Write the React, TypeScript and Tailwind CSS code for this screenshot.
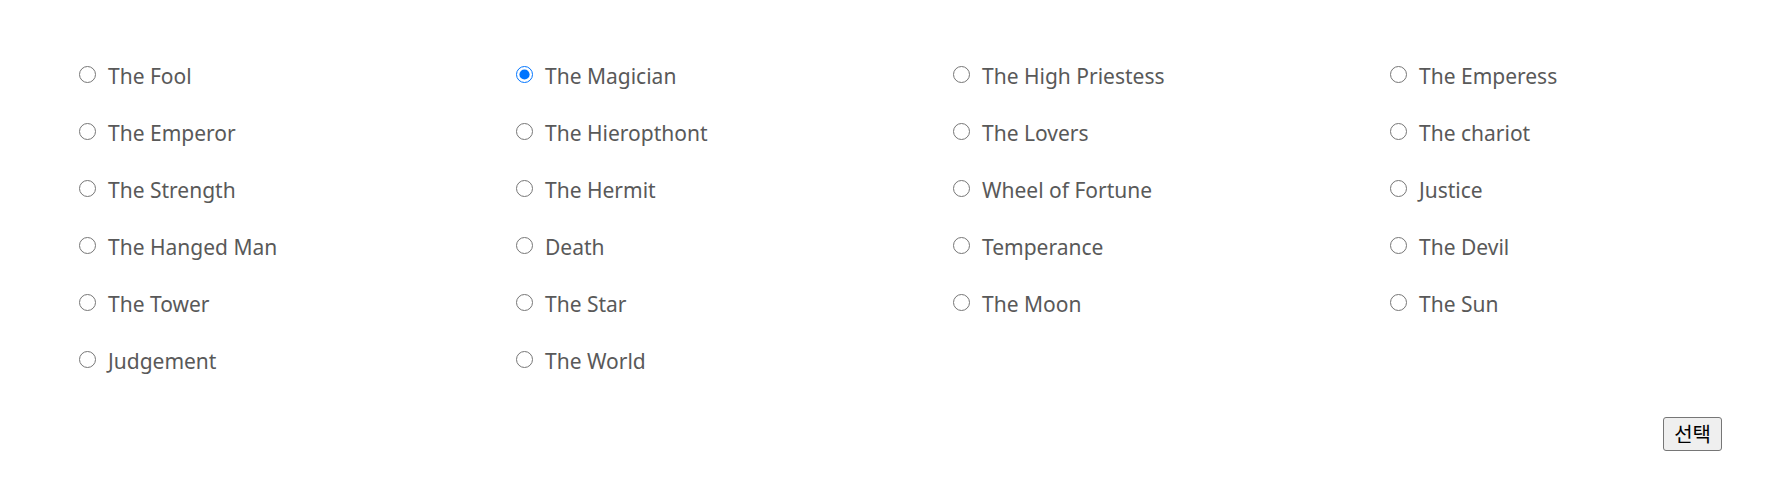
import { useState } from 'react';

const CARDS = [
  'The Fool',
  'The Magician',
  'The High Priestess',
  'The Emperess',
  'The Emperor',
  'The Hieropthont',
  'The Lovers',
  'The chariot',
  'The Strength',
  'The Hermit',
  'Wheel of Fortune',
  'Justice',
  'The Hanged Man',
  'Death',
  'Temperance',
  'The Devil',
  'The Tower',
  'The Star',
  'The Moon',
  'The Sun',
  'Judgement',
  'The World'
];

const App = () => {
  const [picked, setPicked] = useState('The Magician');

  return (
    <div className="w-full bg-white pt-[48px]" style={{ fontFamily: '"Noto Sans", "Noto Sans CJK KR", sans-serif' }}>
      <div className="grid grid-cols-[repeat(4,437px)] pl-[79px]">
        {CARDS.map((card) => (
          <label key={card} className="flex h-[57px] items-center gap-[12px] text-[21px] text-[#595959]">
            <input
              type="radio"
              name="tarot"
              value={card}
              checked={picked === card}
              onChange={() => setPicked(card)}
              className="m-0 mb-[4px] h-[17px] w-[17px]"
            />
            <span>{card}</span>
          </label>
        ))}
      </div>
      <div className="flex justify-end pr-[62px] pt-[27px]">
        <button
          className="h-[34px] rounded-[3px] border border-[#767676] bg-[#efefef] px-[10px] text-[20px] leading-none text-black"
          style={{ fontFamily: '"Noto Sans CJK KR", sans-serif' }}
        >
          선택
        </button>
      </div>
    </div>
  );
};

export default App;
